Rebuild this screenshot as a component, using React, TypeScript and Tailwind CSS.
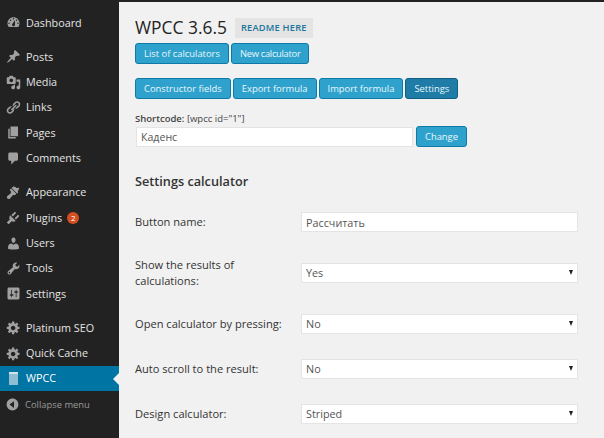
const icons = {
  dashboard:
    "M3.76 16h12.48c1.100-1.370 1.760-3.110 1.760-5 0-4.420-3.580-8-8-8s-8 3.580-8 8c0 1.890.66 3.630 1.760 5zM10 4c.55 0 1 .45 1 1s-.45 1-1 1-1-.45-1-1 .45-1 1-1zM6 6c.55 0 1 .45 1 1s-.45 1-1 1-1-.45-1-1 .45-1 1-1zm8 0c.55 0 1 .45 1 1s-.45 1-1 1-1-.45-1-1 .45-1 1-1zm-5.370 5.550L12 7v6c0 1.100-.9 2-2 2s-2-.9-2-2c0-.57.24-1.080.63-1.450zM4 10c.55 0 1 .45 1 1s-.45 1-1 1-1-.45-1-1 .45-1 1-1zm12 0c.55 0 1 .45 1 1s-.45 1-1 1-1-.45-1-1 .45-1 1-1z",
  pin: "M10.440 3.020l1.820-1.820 6.360 6.350-1.830 1.820c-1.050-.68-2.480-.57-3.410.36l-.75.75c-.92.93-1.040 2.350-.35 3.400l-1.830 1.820-2.410-2.410-2.800 2.790c-.42.420-3.380 2.710-3.800 2.290s1.860-3.390 2.280-3.810l2.790-2.790L4.100 9.360l1.830-1.820c1.050.69 2.480.57 3.400-.36l.75-.75c.93-.92 1.050-2.350.36-3.410z",
  media:
    "M13 11V4c0-.55-.45-1-1-1h-1.670L9 1H5L3.670 3H2c-.55 0-1 .45-1 1v7c0 .55.45 1 1 1h10c.55 0 1-.45 1-1zM7 4.500c1.380 0 2.500 1.120 2.500 2.500S8.380 9.500 7 9.500 4.500 8.380 4.500 7 5.620 4.500 7 4.500zM14 6h5v10.500c0 1.380-1.120 2.500-2.500 2.500S14 17.880 14 16.500s1.120-2.500 2.500-2.500c.17 0 .34.020.5.050V9h-3V6zm-4 8.050V13h2v3.500c0 1.380-1.120 2.500-2.500 2.500S7 17.880 7 16.500 8.120 14 9.500 14c.17 0 .34.020.5.050z",
  link: "M17.740 2.760c1.680 1.690 1.680 4.410 0 6.100l-1.530 1.520c-1.120 1.120-2.700 1.510-4.130 1.170l2.730-2.730 1.520-1.520c.84-.84.84-2.200 0-3.040-.84-.85-2.200-.85-3.040 0l-.77.76-3.480 3.490c-.34-1.430.05-3.020 1.170-4.140l1.530-1.530c1.680-1.680 4.400-1.680 6.090 0zM2.260 17.240c-1.680-1.690-1.680-4.410 0-6.100l1.530-1.520c1.120-1.120 2.700-1.510 4.130-1.170l-2.730 2.730-1.520 1.520c-.84.84-.84 2.200 0 3.040.84.85 2.200.85 3.040 0l.77-.76 3.480-3.490c.34 1.430-.05 3.020-1.170 4.140l-1.530 1.530c-1.680 1.680-4.400 1.680-6.090 0zM8.590 13.430l5.340-5.340c.42-.42.42-1.100 0-1.520-.44-.43-1.130-.39-1.530 0l-5.330 5.340c-.42.42-.42 1.100 0 1.520.44.43 1.130.39 1.520 0z",
  page: "M6 15V2h10v13H6zm-1 1h8v2H3V5h2v11z",
  comment:
    "M5 2h9c1.100 0 2 .9 2 2v7c0 1.100-.9 2-2 2h-2l-5 5v-5H5c-1.100 0-2-.9-2-2V4c0-1.100.9-2 2-2z",
  brush:
    "M7.400 4L9 2.500c.6-.6 2.300-.4 3.500.3 1.200.8 1.500 1.300 2.700 1.300 1.200 0 2.200-.9 2.200-.9s.3 1.200-.3 2.500c-.6 1.300-1.300 2-1.300 3.200 0 1.200.4 1.500.3 2L14.500 11zM6.700 4.700l7.100 7.100-1.900 1.900c-.6-.4-1.900-.7-2.900 0-1 .8-3 3.800-4 4.600-1 .8-2.500.5-3.200-.2-.7-.7-.9-2.200-.1-3.100.8-1 3.800-3 4.600-4 .7-1 .4-2.200 0-2.900L4.800 6.600z",
  plug: "M5.500 7l7.500 7.500c-1.500 1-4 1.500-5.500.5l-4 4L1 16.500l4-4c-1-1.500-.5-4 .5-5.500zM7.200 6.800l3.900-3.900c.5-.5 1.300-.5 1.800 0s.5 1.300 0 1.800L9 8.600zM11.400 11l3.900-3.900c.5-.5 1.300-.5 1.800 0s.5 1.300 0 1.800l-3.900 3.900z",
  user: "M10 9.250c-2.270 0-2.730-3.440-2.730-3.440C7 4.020 7.820 2 9.970 2c2.160 0 2.980 2.020 2.710 3.810 0 0-.41 3.440-2.680 3.440zm0 2.570L12.720 10c2.390 0 4.520 2.330 4.520 4.530v2.490s-3.650 1.130-7.240 1.130c-3.650 0-7.240-1.130-7.240-1.130v-2.490c0-2.250 1.940-4.530 4.430-4.530z",
  wrench:
    "M16.680 9.770c-1.340 1.340-3.300 1.670-4.950.99l-5.410 6.520c-.99.99-2.590.99-3.570 0-.99-.98-.99-2.580 0-3.570l6.520-5.420c-.68-1.650-.35-3.610.99-4.950 1.280-1.280 3.120-1.620 4.720-1.060l-2.890 2.890 2.820 2.820 2.860-2.870c.53 1.580.18 3.390-1.090 4.670zM3.810 16.210c.4.390 1.030.39 1.420 0 .4-.4.400-1.030 0-1.430-.39-.39-1.020-.39-1.420 0-.39.4-.39 1.030 0 1.430z",
  sliders:
    "M18 16V4c0-1.100-.9-2-2-2H4c-1.100 0-2 .9-2 2v12c0 1.100.9 2 2 2h12c1.100 0 2-.9 2-2zM8 11h1c.55 0 1 .45 1 1s-.45 1-1 1H8v1.500c0 .28-.22.5-.5.5s-.5-.22-.5-.5V13H6c-.55 0-1-.45-1-1s.45-1 1-1h1V5.500c0-.28.22-.5.5-.5s.5.22.5.5V11zm5-2h-1c-.55 0-1-.45-1-1s.45-1 1-1h1V5.500c0-.28.22-.5.5-.5s.5.22.5.5V7h1c.55 0 1 .45 1 1s-.45 1-1 1h-1v5.500c0 .28-.22.5-.5.5s-.5-.22-.5-.5V9z",
  gear: "M18 12h-2.180c-.17.7-.44 1.350-.81 1.930l1.540 1.540-2.100 2.100-1.540-1.540c-.58.36-1.230.64-1.910.81V19H8v-2.180c-.68-.17-1.330-.45-1.910-.81l-1.540 1.540-2.120-2.120 1.540-1.540c-.36-.58-.63-1.230-.8-1.890H1V9h2.180c.17-.7.44-1.350.81-1.940L2.450 5.520l2.100-2.100 1.540 1.540c.58-.36 1.230-.64 1.910-.81V2h3v2.180c.68.17 1.330.45 1.910.81l1.540-1.540 2.120 2.120-1.540 1.540c.36.58.63 1.230.8 1.890H18v3zm-8.500 1.500c1.660 0 3-1.340 3-3s-1.340-3-3-3-3 1.340-3 3 1.340 3 3 3z",
  collapse:
    "M10 2.160c4.330 0 7.840 3.510 7.840 7.840s-3.510 7.840-7.840 7.840S2.160 14.330 2.160 10 5.670 2.160 10 2.160zM12 5.500L6 10l6 4.500z",
};

type MenuItem = { label: string; icon: keyof typeof icons; badge?: number };

const menuGroups: MenuItem[][] = [
  [{ label: "Dashboard", icon: "dashboard" }],
  [
    { label: "Posts", icon: "pin" },
    { label: "Media", icon: "media" },
    { label: "Links", icon: "link" },
    { label: "Pages", icon: "page" },
    { label: "Comments", icon: "comment" },
  ],
  [
    { label: "Appearance", icon: "brush" },
    { label: "Plugins", icon: "plug", badge: 2 },
    { label: "Users", icon: "user" },
    { label: "Tools", icon: "wrench" },
    { label: "Settings", icon: "sliders" },
  ],
  [
    { label: "Platinum SEO", icon: "gear" },
    { label: "Quick Cache", icon: "gear" },
  ],
];

const btn =
  "h-[21px] rounded-[3px] border border-[#0f7aa5] bg-[#2ea2cc] px-2 text-[9.4px] leading-[19px] text-[#eaf6fb] whitespace-nowrap";

function DashIcon({ name, className }: { name: keyof typeof icons; className: string }) {
  return (
    <svg viewBox="0 0 20 20" className={className} fill="currentColor">
      <path d={icons[name]} fillRule="evenodd" />
    </svg>
  );
}

function Sidebar() {
  return (
    <aside className="w-[119px] shrink-0 bg-[#222] pt-[10px] text-[10.8px] text-[#e4e4e4]">
      {menuGroups.map((group) => (
        <div key={group[0].label} className="mb-[9px]">
          {group.map((item) => (
            <div key={item.label} className="flex h-[25.3px] items-center">
              <span className="flex w-[26px] justify-center text-[#a0a0a0]">
                <DashIcon name={item.icon} className="h-[15px] w-[15px]" />
              </span>
              <span>{item.label}</span>
              {item.badge && (
                <span className="ml-[5px] flex h-[12px] w-[12px] items-center justify-center rounded-full bg-[#d54e21] text-[8px] text-white">
                  {item.badge}
                </span>
              )}
            </div>
          ))}
        </div>
      ))}
      <div className="relative -mt-[9px] flex h-[25.3px] items-center bg-[#0074a2] text-white">
        <span className="flex w-[26px] justify-center">
          <span className="flex h-[13px] w-[9px] flex-col bg-[#8fbdd2]">
            <span className="h-[2px] bg-[#cfe3ec]" />
          </span>
        </span>
        <span>WPCC</span>
        <span className="absolute right-0 top-[7px] h-0 w-0 border-y-[6px] border-r-[6px] border-y-transparent border-r-[#f1f1f1]" />
      </div>
      <div className="flex h-[27px] items-center text-[9.4px] text-[#999]">
        <span className="flex w-[25px] justify-center text-[#a0a0a0]">
          <DashIcon name="collapse" className="h-[15px] w-[15px]" />
        </span>
        <span>Collapse menu</span>
      </div>
    </aside>
  );
}

function Field({ label, children }: { label: string; children: React.ReactNode }) {
  return (
    <div className="flex items-center">
      <label className="w-[166px] pr-[10px] text-[11.1px] leading-[16px] text-[#333]">{label}</label>
      {children}
    </div>
  );
}

function Select({ value }: { value: string }) {
  return (
    <div className="relative w-[277px]">
      <select
        defaultValue={value}
        className="block h-[20px] w-full appearance-none border border-[#e4e4e4] bg-white pl-[4px] text-[10.8px] text-[#555]"
      >
        <option>{value}</option>
      </select>
      <span className="absolute right-[5px] top-[7px] h-0 w-0 border-x-[2.5px] border-t-[5px] border-x-transparent border-t-[#222]" />
    </div>
  );
}

export default function App() {
  return (
    <div
      className="flex h-[438px] w-[604px] overflow-hidden bg-[#f1f1f1]"
      style={{ fontFamily: '"Open Sans", "Noto Sans", sans-serif' }}
    >
      <Sidebar />
      <main className="flex-1 border-t-2 border-[#222] pl-[16px]">
        <div className="mt-[14px] flex h-[23px] items-center">
          <h1 className="text-[17.4px] leading-[23px] text-[#222]">WPCC 3.6.5</h1>
          <a className="ml-[8px] flex h-[20px] items-center bg-[#e4e4e4] px-[6px] text-[9.3px] font-semibold tracking-[0.2px] text-[#21759b]">
            README HERE
          </a>
        </div>
        <div className="mt-[4px] flex gap-[2px]">
          <button className={btn}>List of calculators</button>
          <button className={`${btn} tracking-[-0.3px]`}>New calculator</button>
        </div>
        <div className="mt-[14px] flex gap-[2px]">
          <button className={btn}>Constructor fields</button>
          <button className={btn}>Export formula</button>
          <button className={btn}>Import formula</button>
          <button className="h-[21px] rounded-[3px] border border-[#0e5f85] bg-[#1e7ca7] px-2 text-[9.4px] leading-[19px] text-[#eaf6fb]">
            Settings
          </button>
        </div>
        <p className="mt-[13px] h-[14px] text-[9.5px] leading-[14px] text-[#444]">
          <span className="font-semibold">Shortcode:</span> [wpcc id="1"]
        </p>
        <div className="flex items-center">
          <input
            defaultValue="Каденс"
            className="ml-[1px] h-[20px] w-[277px] border border-[#e4e4e4] bg-white pl-[4px] text-[10.6px] text-[#555]"
          />
          <button className={`${btn} ml-[3px]`}>Change</button>
        </div>
        <h2 className="mt-[24px] text-[12.7px] font-semibold leading-[20px] text-[#333]">Settings calculator</h2>
        <div className="mt-[21px] flex flex-col gap-[25px]">
          <Field label="Button name:">
            <input
              defaultValue="Рассчитать"
              className="h-[20px] w-[277px] border border-[#e4e4e4] bg-white pl-[4px] text-[10.8px] text-[#555]"
            />
          </Field>
          <Field label="Show the results of calculations:">
            <Select value="Yes" />
          </Field>
          <Field label="Open calculator by pressing:">
            <Select value="No" />
          </Field>
          <Field label="Auto scroll to the result:">
            <Select value="No" />
          </Field>
          <Field label="Design calculator:">
            <Select value="Striped" />
          </Field>
        </div>
      </main>
    </div>
  );
}
